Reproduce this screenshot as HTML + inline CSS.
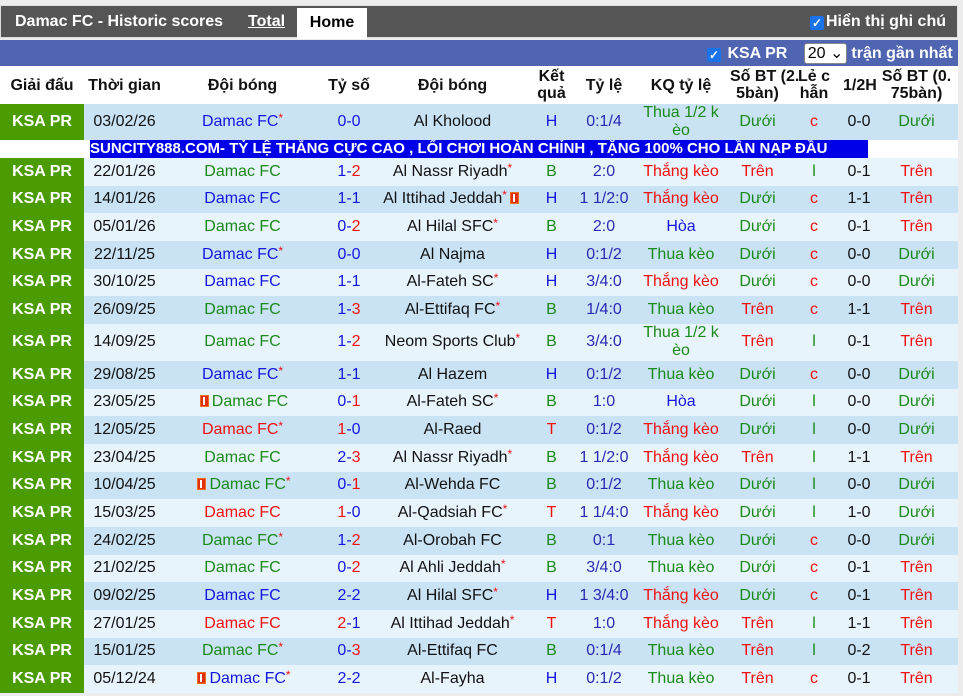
<!DOCTYPE html>
<html><head><meta charset="utf-8">
<style>
body{margin:0;background:#ececec;font-family:"Liberation Sans",Arial,sans-serif;width:963px;height:696px;overflow:hidden;position:relative}
.top{position:absolute;left:0;top:5px;width:958px;height:33px;background:#555;border:1px solid #ddd;box-sizing:border-box}
.top .t{position:absolute;top:7px;color:#fff;font-weight:bold;font-size:16px}
.tab{position:absolute;left:296px;top:2px;width:70px;height:31px;background:#fff;color:#000;font-weight:bold;font-size:16px;text-align:center;line-height:29px}
.cb{display:inline-block;width:14px;height:14px;background:#1a73e8;border-radius:2px;color:#fff;font-size:12px;line-height:14px;text-align:center;vertical-align:-1px;margin-right:2px}
.blue{position:absolute;left:0;top:40px;width:958px;height:26px;background:#5065b1;color:#fff;font-weight:bold;font-size:16px}
.sel{display:inline-block;background:#fff;color:#000;font-weight:normal;border:1px solid #888;border-radius:3px;padding:0 3px;height:19px;line-height:19px;margin:0 4px}
table{position:absolute;left:0;top:66px;width:958px;border-collapse:collapse;table-layout:fixed;font-size:16px;line-height:18px}
td,th{padding:0;text-align:center;overflow:hidden;white-space:nowrap;border:0;box-sizing:border-box}
th{background:#fff;height:38px;font-weight:bold;font-size:16px;line-height:17px;color:#111;overflow:visible}
tr.hd{height:38px}
tr.a,tr.b{height:27.67px}
td{height:27.67px;color:#111}
td.k{background:#4b9b03;color:#fff;font-weight:bold}
tr.a td{background:#e8f4fc}
tr.b td{background:#c9e3f5}
tr.a td.k,tr.b td.k{background:#4b9b03}
tr.tall,tr.tall td{height:36px}
tr.tall2,tr.tall2 td{height:37px}
.tall td,.tall2 td{line-height:18px;white-space:normal}
.r{color:#f01010}.g{color:#1a8a1a}.u{color:#1515e0}.n{color:#2a2ab0}
.s{color:#f01010;font-size:12px;line-height:0;position:relative;top:-4px}
.card{display:inline-block;width:9px;height:12px;background:#e03010;border:1px solid #f07020;box-sizing:border-box;position:relative;vertical-align:-1px;margin:0 3px}
.card:after{content:"";position:absolute;left:2px;top:1px;width:2px;height:8px;background:#fff}
tr.ad,tr.ad td{height:18px;background:#fff}
.adt{background:#0000e8;color:#fff;font-weight:bold;font-size:15px;text-align:left;display:inline-block;width:778px;height:18px;line-height:18px;white-space:nowrap;overflow:hidden;vertical-align:top}
</style></head><body>
<div class="top">
<span class="t" style="left:14px">Damac FC - Historic scores</span>
<span class="t" style="left:247px;text-decoration:underline;font-weight:bold">Total</span>
<div class="tab">Home</div>
<span class="t" style="left:809px"><span class="cb">✓</span>Hiển thị ghi chú</span>
</div>
<div class="blue"><span style="position:absolute;left:707px;top:3px"><span class="cb">✓</span> KSA PR <span class="sel" style="margin-left:12px">20 ⌄</span>trận gần nhất</span></div>
<table>
<colgroup><col style="width:84px"><col style="width:81px"><col style="width:155px"><col style="width:58px"><col style="width:149px"><col style="width:49px"><col style="width:56px"><col style="width:98px"><col style="width:55px"><col style="width:58px"><col style="width:32px"><col></colgroup>
<tr class="hd"><th>Giải đấu</th><th>Thời gian</th><th>Đội bóng</th><th>Tỷ số</th><th>Đội bóng</th><th>Kết<br>quả</th><th>Tỷ lệ</th><th>KQ tỷ lệ</th><th style="white-space:nowrap">Số BT (2.<br>5bàn)</th><th>Lẻ c<br>hẫn</th><th>1/2H</th><th style="white-space:nowrap">Số BT (0.<br>75bàn)</th></tr>
<tr class="b tall"><td class="k">KSA PR</td><td>03/02/26</td><td class="u">Damac FC<span class="s">*</span></td><td class="u">0-0</td><td>Al Kholood</td><td class="u">H</td><td class="n">0:1/4</td><td class="g">Thua 1/2 k<br>èo</td><td class="g">Dưới</td><td class="r">c</td><td>0-0</td><td class="g">Dưới</td></tr>
<tr class="ad"><td></td><td colspan="11" style="text-align:left;padding-left:6px"><span class="adt">SUNCITY888.COM- TỶ LỆ THẮNG CỰC CAO , LỐI CHƠI HOÀN CHỈNH , TẶNG 100% CHO LẦN NẠP ĐẦU</span></td></tr>
<tr class="a"><td class="k">KSA PR</td><td>22/01/26</td><td class="g">Damac FC</td><td><span class="u">1-</span><span class="r">2</span></td><td>Al Nassr Riyadh<span class="s">*</span></td><td class="g">B</td><td class="n">2:0</td><td class="r">Thắng kèo</td><td class="r">Trên</td><td class="g">l</td><td>0-1</td><td class="r">Trên</td></tr>
<tr class="b"><td class="k">KSA PR</td><td>14/01/26</td><td class="u">Damac FC</td><td class="u">1-1</td><td>Al Ittihad Jeddah<span class="s">*</span><span class="card"></span></td><td class="u">H</td><td class="n">1 1/2:0</td><td class="r">Thắng kèo</td><td class="g">Dưới</td><td class="r">c</td><td>1-1</td><td class="r">Trên</td></tr>
<tr class="a"><td class="k">KSA PR</td><td>05/01/26</td><td class="g">Damac FC</td><td><span class="u">0-</span><span class="r">2</span></td><td>Al Hilal SFC<span class="s">*</span></td><td class="g">B</td><td class="n">2:0</td><td class="u">Hòa</td><td class="g">Dưới</td><td class="r">c</td><td>0-1</td><td class="r">Trên</td></tr>
<tr class="b"><td class="k">KSA PR</td><td>22/11/25</td><td class="u">Damac FC<span class="s">*</span></td><td class="u">0-0</td><td>Al Najma</td><td class="u">H</td><td class="n">0:1/2</td><td class="g">Thua kèo</td><td class="g">Dưới</td><td class="r">c</td><td>0-0</td><td class="g">Dưới</td></tr>
<tr class="a"><td class="k">KSA PR</td><td>30/10/25</td><td class="u">Damac FC</td><td class="u">1-1</td><td>Al-Fateh SC<span class="s">*</span></td><td class="u">H</td><td class="n">3/4:0</td><td class="r">Thắng kèo</td><td class="g">Dưới</td><td class="r">c</td><td>0-0</td><td class="g">Dưới</td></tr>
<tr class="b"><td class="k">KSA PR</td><td>26/09/25</td><td class="g">Damac FC</td><td><span class="u">1-</span><span class="r">3</span></td><td>Al-Ettifaq FC<span class="s">*</span></td><td class="g">B</td><td class="n">1/4:0</td><td class="g">Thua kèo</td><td class="r">Trên</td><td class="r">c</td><td>1-1</td><td class="r">Trên</td></tr>
<tr class="a tall2"><td class="k">KSA PR</td><td>14/09/25</td><td class="g">Damac FC</td><td><span class="u">1-</span><span class="r">2</span></td><td>Neom Sports Club<span class="s">*</span></td><td class="g">B</td><td class="n">3/4:0</td><td class="g">Thua 1/2 k<br>èo</td><td class="r">Trên</td><td class="g">l</td><td>0-1</td><td class="r">Trên</td></tr>
<tr class="b"><td class="k">KSA PR</td><td>29/08/25</td><td class="u">Damac FC<span class="s">*</span></td><td class="u">1-1</td><td>Al Hazem</td><td class="u">H</td><td class="n">0:1/2</td><td class="g">Thua kèo</td><td class="g">Dưới</td><td class="r">c</td><td>0-0</td><td class="g">Dưới</td></tr>
<tr class="a"><td class="k">KSA PR</td><td>23/05/25</td><td class="g"><span class="card"></span>Damac FC</td><td><span class="u">0-</span><span class="r">1</span></td><td>Al-Fateh SC<span class="s">*</span></td><td class="g">B</td><td class="n">1:0</td><td class="u">Hòa</td><td class="g">Dưới</td><td class="g">l</td><td>0-0</td><td class="g">Dưới</td></tr>
<tr class="b"><td class="k">KSA PR</td><td>12/05/25</td><td class="r">Damac FC<span class="s">*</span></td><td><span class="r">1</span><span class="u">-0</span></td><td>Al-Raed</td><td class="r">T</td><td class="n">0:1/2</td><td class="r">Thắng kèo</td><td class="g">Dưới</td><td class="g">l</td><td>0-0</td><td class="g">Dưới</td></tr>
<tr class="a"><td class="k">KSA PR</td><td>23/04/25</td><td class="g">Damac FC</td><td><span class="u">2-</span><span class="r">3</span></td><td>Al Nassr Riyadh<span class="s">*</span></td><td class="g">B</td><td class="n">1 1/2:0</td><td class="r">Thắng kèo</td><td class="r">Trên</td><td class="g">l</td><td>1-1</td><td class="r">Trên</td></tr>
<tr class="b"><td class="k">KSA PR</td><td>10/04/25</td><td class="g"><span class="card"></span>Damac FC<span class="s">*</span></td><td><span class="u">0-</span><span class="r">1</span></td><td>Al-Wehda FC</td><td class="g">B</td><td class="n">0:1/2</td><td class="g">Thua kèo</td><td class="g">Dưới</td><td class="g">l</td><td>0-0</td><td class="g">Dưới</td></tr>
<tr class="a"><td class="k">KSA PR</td><td>15/03/25</td><td class="r">Damac FC</td><td><span class="r">1</span><span class="u">-0</span></td><td>Al-Qadsiah FC<span class="s">*</span></td><td class="r">T</td><td class="n">1 1/4:0</td><td class="r">Thắng kèo</td><td class="g">Dưới</td><td class="g">l</td><td>1-0</td><td class="g">Dưới</td></tr>
<tr class="b"><td class="k">KSA PR</td><td>24/02/25</td><td class="g">Damac FC<span class="s">*</span></td><td><span class="u">1-</span><span class="r">2</span></td><td>Al-Orobah FC</td><td class="g">B</td><td class="n">0:1</td><td class="g">Thua kèo</td><td class="g">Dưới</td><td class="r">c</td><td>0-0</td><td class="g">Dưới</td></tr>
<tr class="a"><td class="k">KSA PR</td><td>21/02/25</td><td class="g">Damac FC</td><td><span class="u">0-</span><span class="r">2</span></td><td>Al Ahli Jeddah<span class="s">*</span></td><td class="g">B</td><td class="n">3/4:0</td><td class="g">Thua kèo</td><td class="g">Dưới</td><td class="r">c</td><td>0-1</td><td class="r">Trên</td></tr>
<tr class="b"><td class="k">KSA PR</td><td>09/02/25</td><td class="u">Damac FC</td><td class="u">2-2</td><td>Al Hilal SFC<span class="s">*</span></td><td class="u">H</td><td class="n">1 3/4:0</td><td class="r">Thắng kèo</td><td class="g">Dưới</td><td class="r">c</td><td>0-1</td><td class="r">Trên</td></tr>
<tr class="a"><td class="k">KSA PR</td><td>27/01/25</td><td class="r">Damac FC</td><td><span class="r">2</span><span class="u">-1</span></td><td>Al Ittihad Jeddah<span class="s">*</span></td><td class="r">T</td><td class="n">1:0</td><td class="r">Thắng kèo</td><td class="r">Trên</td><td class="g">l</td><td>1-1</td><td class="r">Trên</td></tr>
<tr class="b"><td class="k">KSA PR</td><td>15/01/25</td><td class="g">Damac FC<span class="s">*</span></td><td><span class="u">0-</span><span class="r">3</span></td><td>Al-Ettifaq FC</td><td class="g">B</td><td class="n">0:1/4</td><td class="g">Thua kèo</td><td class="r">Trên</td><td class="g">l</td><td>0-2</td><td class="r">Trên</td></tr>
<tr class="a"><td class="k">KSA PR</td><td>05/12/24</td><td class="u"><span class="card"></span>Damac FC<span class="s">*</span></td><td class="u">2-2</td><td>Al-Fayha</td><td class="u">H</td><td class="n">0:1/2</td><td class="g">Thua kèo</td><td class="r">Trên</td><td class="r">c</td><td>0-1</td><td class="r">Trên</td></tr>
</table>
</body></html>
